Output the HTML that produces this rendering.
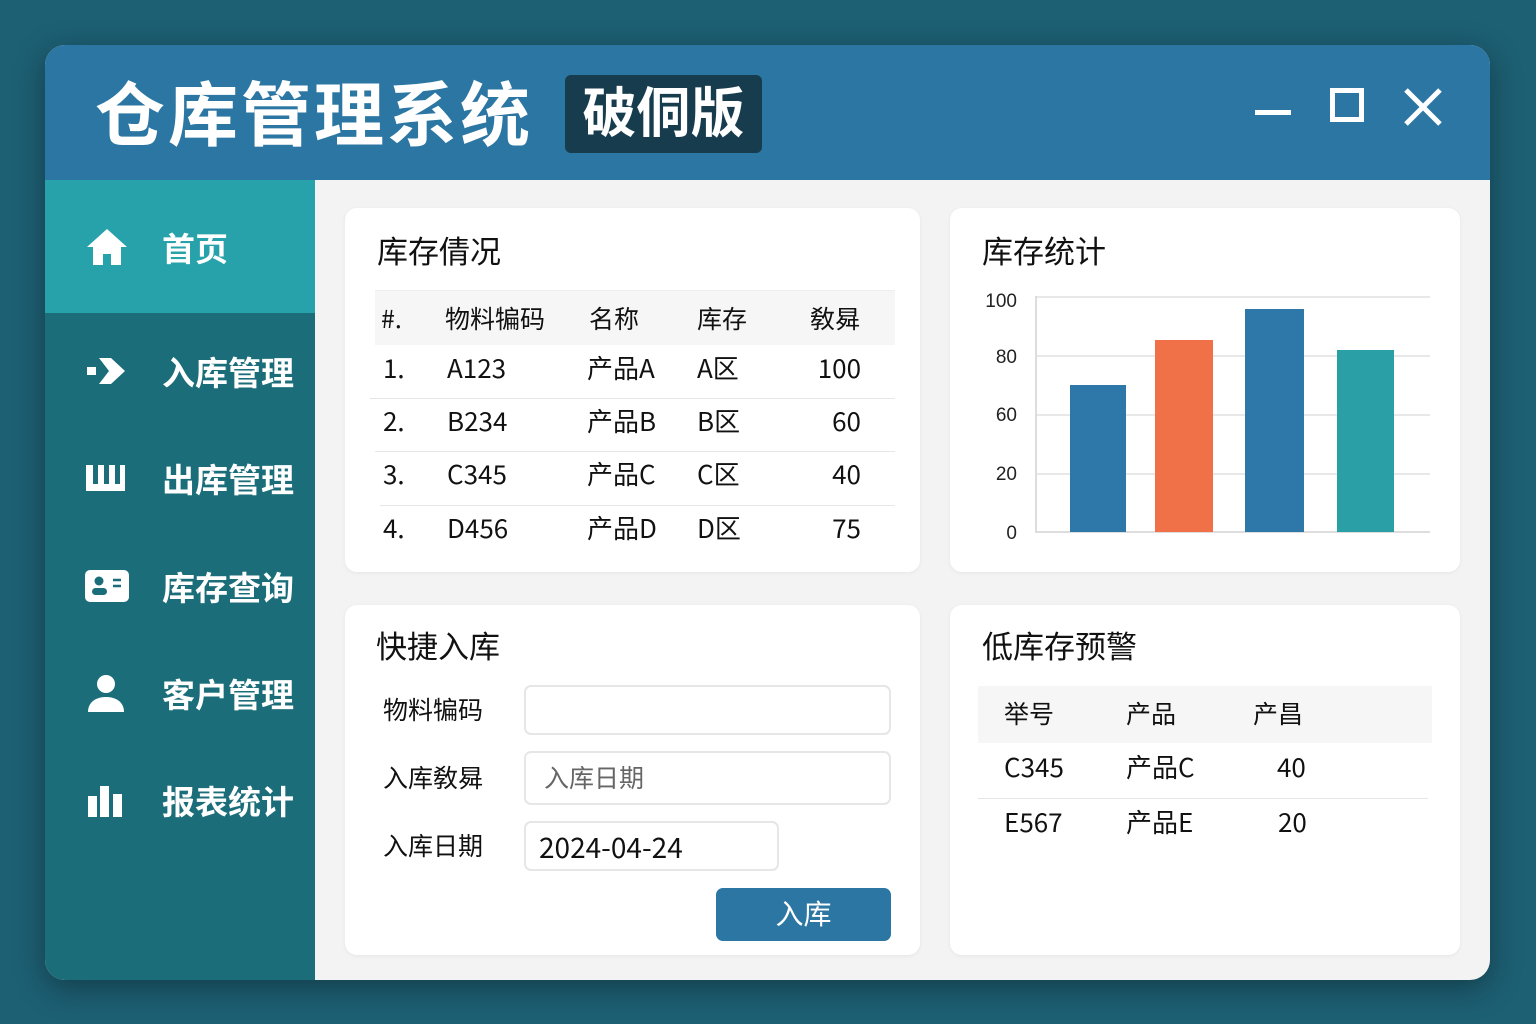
<!DOCTYPE html>
<html><head><meta charset="utf-8"><style>
*{margin:0;padding:0;box-sizing:border-box}
body{width:1536px;height:1024px;background:#1d5f73;font-family:"Liberation Sans","Noto Sans CJK SC",sans-serif;position:relative;overflow:hidden}
.a{position:absolute}
.win{left:45px;top:45px;width:1445px;height:935px;border-radius:20px;overflow:hidden;background:#f3f3f3;box-shadow:0 8px 30px rgba(0,0,0,.35)}
.title{left:0;top:0;width:1445px;height:135px;background:#2b76a2}
.side{left:0;top:135px;width:270px;height:800px;background:#1b6e79}
.nav{left:0;width:270px;height:107px;color:#fff;font-size:33px;font-weight:bold}
.nav span{position:absolute;left:117px;top:50%;transform:translateY(-50%)}
.nav svg{position:absolute;left:40px;top:50%;transform:translateY(-50%)}
.card{background:#fff;border-radius:12px;box-shadow:0 1px 4px rgba(0,0,0,.06)}
.h{font-size:31px;color:#111;font-family:"Noto Sans CJK SC",sans-serif;line-height:1}
.t{font-size:26px;color:#111;font-family:"Noto Sans CJK SC",sans-serif;line-height:1}
.row{border-top:1px solid #e6e6e6}
</style></head><body>
<div class="a win">
 <div class="a title">
  <div class="a" style="left:50px;top:26px;font-size:70px;font-weight:bold;color:#fff;letter-spacing:3px;font-family:'Noto Sans CJK SC',sans-serif;line-height:1.15">仓库管理系统</div>
  <div class="a" style="left:520px;top:30px;width:197px;height:78px;background:#173c4e;border-radius:6px;color:#fff;font-size:54px;font-weight:bold;text-align:center;line-height:78px">破侗版</div>
  <div class="a" style="left:1210px;top:65px;width:36px;height:5px;background:#fff"></div>
  <div class="a" style="left:1285px;top:43px;width:34px;height:34px;border:5px solid #fff"></div>
  <svg class="a" style="left:1358px;top:42px" width="40" height="40"><path d="M3 3L37 37M37 3L3 37" stroke="#fff" stroke-width="5"/></svg>
 </div>
 <div class="a side">
  <div class="a nav" style="top:0;height:133px;background:#27a2aa"><svg width="44" height="40" viewBox="0 0 44 40"><path d="M22 2L2 20h6v18h10V27h8v11h10V20h6z" fill="#fff"/></svg><span>首页</span></div>
  <div class="a nav" style="top:137px"><svg width="44" height="30" viewBox="0 0 44 30"><path d="M2 11h9v8H2zM14 2h12l14 13-14 13H14l10-13z" fill="#fff"/></svg><span>入库管理</span></div>
  <div class="a nav" style="top:244px"><svg width="40" height="26" viewBox="0 0 40 26"><path d="M1 0h7v19h5V0h6v19h5V0h6v19h5V0h5v26H1z" fill="#fff"/></svg><span>出库管理</span></div>
  <div class="a nav" style="top:352px"><svg width="44" height="32" viewBox="0 0 44 32"><rect x="0" y="0" width="44" height="32" rx="5" fill="#fff"/><circle cx="14" cy="11" r="4.5" fill="#1b6e79"/><rect x="7" y="18" width="15" height="7" rx="3.5" fill="#1b6e79"/><path d="M28 10h8M28 16h8" stroke="#1b6e79" stroke-width="2.5"/></svg><span>库存查询</span></div>
  <div class="a nav" style="top:459px"><svg width="40" height="40" viewBox="0 0 40 40"><circle cx="21" cy="11" r="9" fill="#fff"/><path d="M3 39c0-10 8-15 18-15s18 5 18 15z" fill="#fff"/></svg><span>客户管理</span></div>
  <div class="a nav" style="top:566px"><svg width="40" height="36" viewBox="0 0 40 36"><path d="M3 14h9v21H3zM15 4h9v31h-9zM28 12h9v23h-9z" fill="#fff"/></svg><span>报表统计</span></div>
 </div>
 <!-- card1 -->
 <div class="a card" style="left:300px;top:163px;width:575px;height:364px">
  <div class="a h" style="left:32px;top:26px">库存倩况</div>
  <div class="a" style="left:30px;top:82px;width:520px;height:55px;background:#f6f6f6;border-top:1px solid #eee"></div>
  <div class="a t" style="left:36px;top:98px;font-size:25px">#.</div><div class="a t" style="left:100px;top:98px;font-size:25px">物料犏码</div><div class="a t" style="left:244px;top:98px;font-size:25px">名称</div><div class="a t" style="left:352px;top:98px;font-size:25px">库存</div><div class="a t" style="left:465px;top:98px;font-size:25px">敎曻</div>
  <div class="a row" style="left:25px;top:190px;width:525px"></div>
  <div class="a row" style="left:30px;top:243px;width:520px"></div>
  <div class="a row" style="left:35px;top:297px;width:515px"></div>
  <div class="a t" style="left:38px;top:197px;top:197px;margin-top:-50px">1.</div><div class="a t" style="left:102px;top:147px">A123</div><div class="a t" style="left:242px;top:147px">产品A</div><div class="a t" style="left:352px;top:147px">A区</div><div class="a t" style="left:440px;top:147px;width:76px;text-align:right">100</div>
  <div class="a t" style="left:38px;top:200px">2.</div><div class="a t" style="left:102px;top:200px">B234</div><div class="a t" style="left:242px;top:200px">产品B</div><div class="a t" style="left:352px;top:200px">B区</div><div class="a t" style="left:440px;top:200px;width:76px;text-align:right">60</div>
  <div class="a t" style="left:38px;top:253px">3.</div><div class="a t" style="left:102px;top:253px">C345</div><div class="a t" style="left:242px;top:253px">产品C</div><div class="a t" style="left:352px;top:253px">C区</div><div class="a t" style="left:440px;top:253px;width:76px;text-align:right">40</div>
  <div class="a t" style="left:38px;top:307px">4.</div><div class="a t" style="left:102px;top:307px">D456</div><div class="a t" style="left:242px;top:307px">产品D</div><div class="a t" style="left:352px;top:307px">D区</div><div class="a t" style="left:440px;top:307px;width:76px;text-align:right">75</div>
 </div>
 <!-- card2 chart -->
 <div class="a card" style="left:905px;top:163px;width:510px;height:364px">
  <div class="a h" style="left:32px;top:26px">库存统计</div>
  <svg class="a" style="left:0;top:0" width="510" height="364">
   <g font-family="Liberation Sans" font-size="19" fill="#222" text-anchor="end">
    <text x="67" y="99">100</text><text x="67" y="155">80</text><text x="67" y="213">60</text><text x="67" y="272">20</text><text x="67" y="331">0</text>
   </g>
   <g stroke="#e8e8e8" stroke-width="2"><path d="M85 89H480M85 148H480M85 207H480M85 266H480M85 324H480"/></g>
   <path d="M86 88V324H480" stroke="#ddd" stroke-width="2" fill="none"/>
   <rect x="120" y="177" width="56" height="147" fill="#2d78a8"/>
   <rect x="205" y="132" width="58" height="192" fill="#f07147"/>
   <rect x="295" y="101" width="59" height="223" fill="#2d78a8"/>
   <rect x="387" y="142" width="57" height="182" fill="#2a9fa5"/>
  </svg>
 </div>
 <!-- card3 form -->
 <div class="a card" style="left:300px;top:560px;width:575px;height:350px">
  <div class="a h" style="left:31px;top:24px">快捷入库</div>
  <div class="a t" style="left:38px;top:92px;font-size:25px">物料犏码</div>
  <div class="a t" style="left:38px;top:160px;font-size:25px">入库敎曻</div>
  <div class="a t" style="left:38px;top:228px;font-size:25px">入库日期</div>
  <div class="a" style="left:179px;top:80px;width:367px;height:50px;border:2px solid #e6e6e6;border-radius:7px"></div>
  <div class="a" style="left:179px;top:146px;width:367px;height:54px;border:2px solid #e6e6e6;border-radius:7px;color:#666;font-size:25px;padding:11px 18px;font-family:'Noto Sans CJK SC',sans-serif;line-height:1.1">入库日期</div>
  <div class="a" style="left:179px;top:216px;width:255px;height:50px;border:2px solid #e6e6e6;border-radius:7px;color:#111;font-size:28px;padding:9px 13px;font-family:'Noto Sans CJK SC',sans-serif;line-height:1.1">2024-04-24</div>
  <div class="a" style="left:371px;top:283px;width:175px;height:53px;background:#2b76a2;border-radius:7px;color:#fff;font-size:28px;text-align:center;line-height:53px">入库</div>
 </div>
 <!-- card4 -->
 <div class="a card" style="left:905px;top:560px;width:510px;height:350px">
  <div class="a h" style="left:32px;top:24px">低库存预警</div>
  <div class="a" style="left:28px;top:81px;width:454px;height:57px;background:#f6f6f6"></div>
  <div class="a t" style="left:54px;top:96px;font-size:25px">举号</div><div class="a t" style="left:176px;top:96px;font-size:25px">产品</div><div class="a t" style="left:303px;top:96px;font-size:25px">产昌</div>
  <div class="a row" style="left:28px;top:193px;width:450px"></div>
  <div class="a t" style="left:54px;top:149px">C345</div><div class="a t" style="left:176px;top:149px">产品C</div><div class="a t" style="left:327px;top:149px">40</div>
  <div class="a t" style="left:54px;top:204px">E567</div><div class="a t" style="left:176px;top:204px">产品E</div><div class="a t" style="left:328px;top:204px">20</div>
 </div>
</div>
</body></html>
